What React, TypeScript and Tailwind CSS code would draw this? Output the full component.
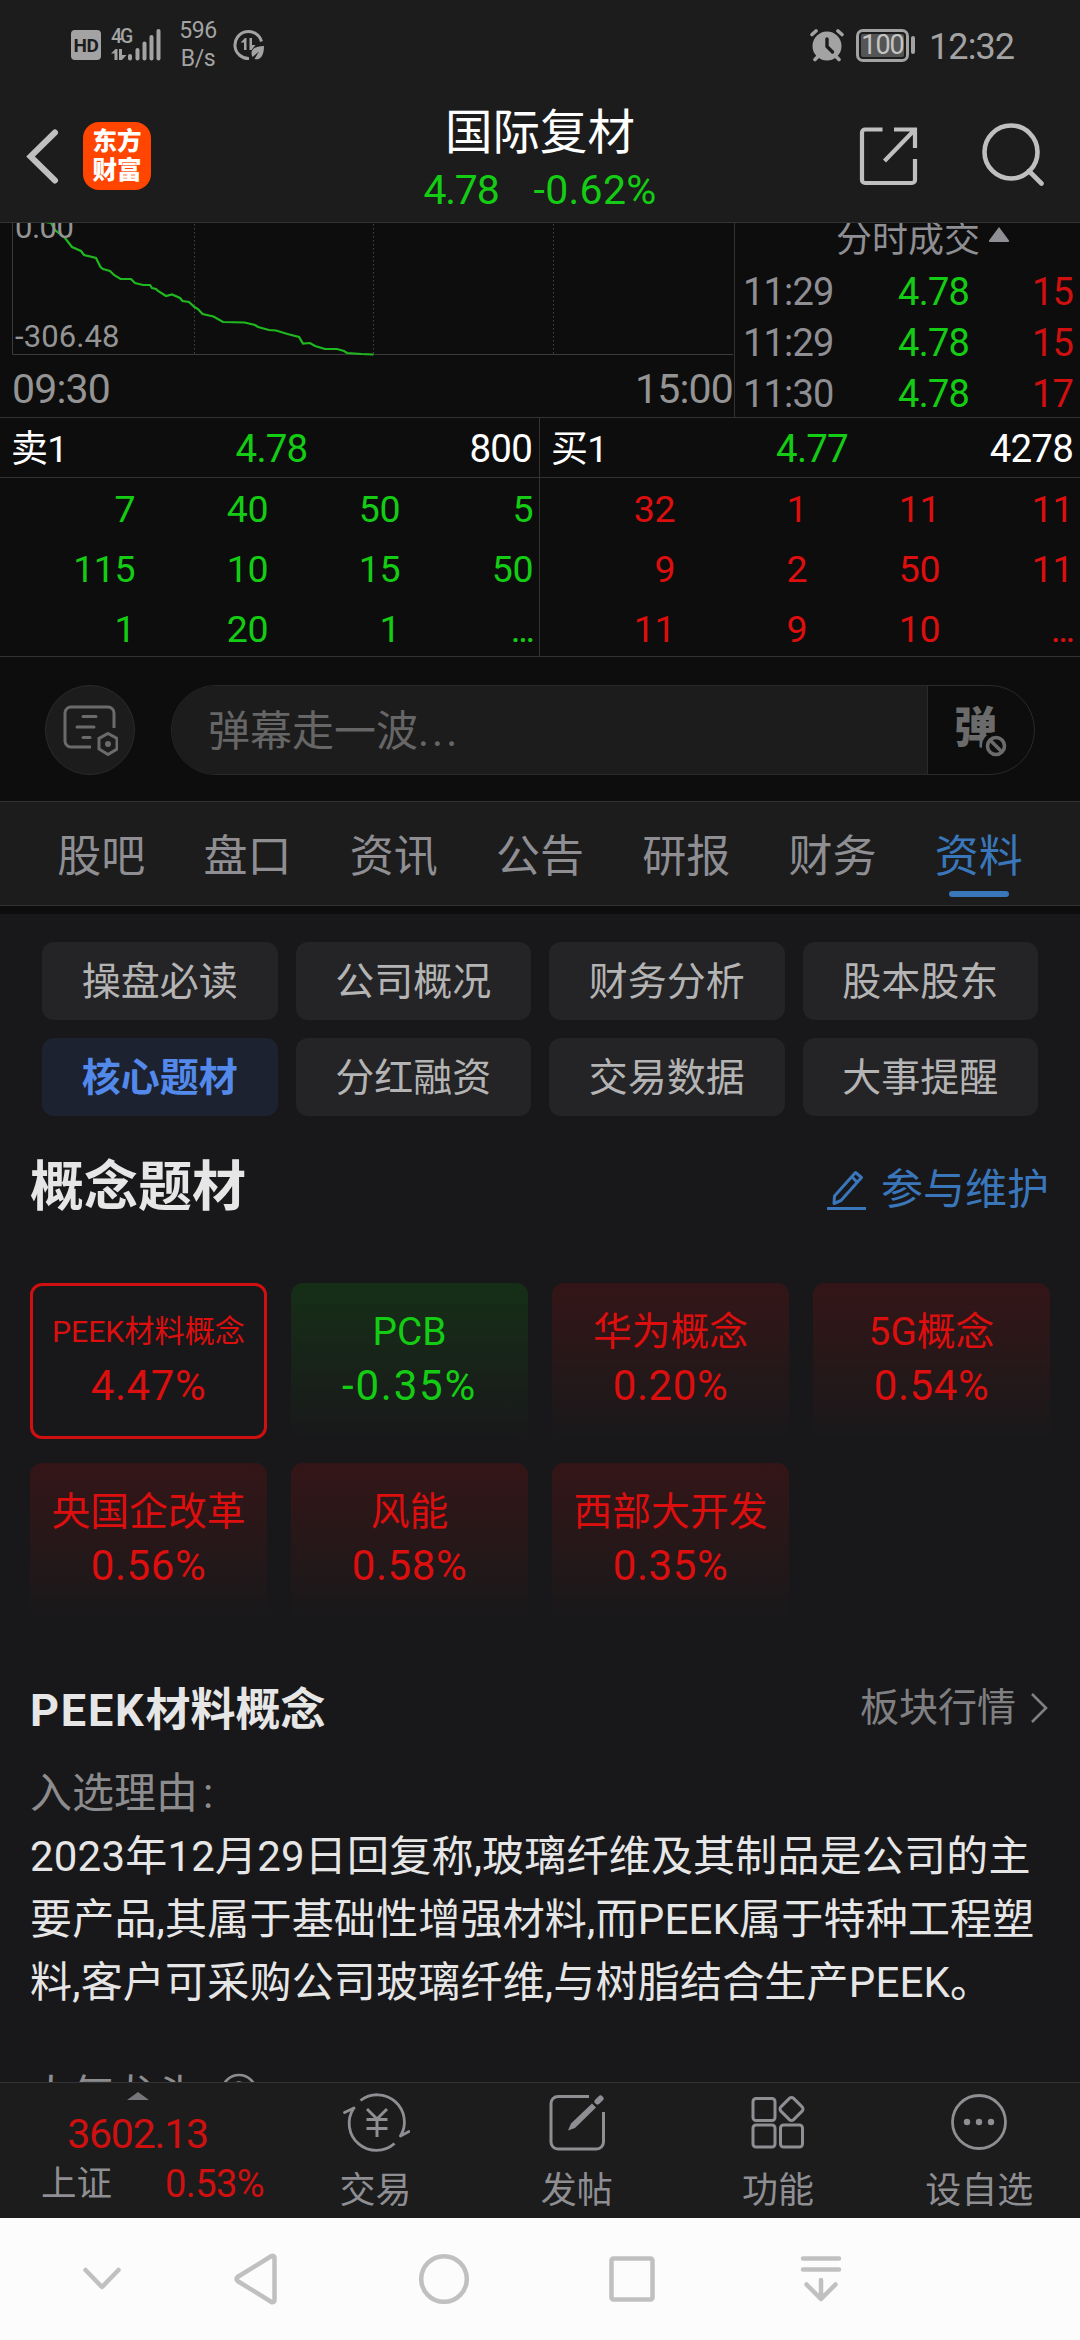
import React from 'react';

const CHART_POINTS =
  '45,-1 51,0 55,7 65,15 72,24 81,28 84,32 96,35 98,39 100.5,44 103,46 110,48 114,52 120.5,56 131,56 135,60 143,62 150,62 152,65 156,66 158,68 166,73 172,71.5 180,75 182.5,78 189,79 194.5,84 198,86 202.5,91 213.5,93.5 223,99 244.5,99.5 255,102 258,104 269,107 276,107.5 287.5,111 299,114 303,120.5 310,120 315,123 325,126 337,126 344,128 347,130 361.5,131 373.5,131.5';

const TRADES = [
  { time: '11:29', price: '4.78', volume: '15' },
  { time: '11:29', price: '4.78', volume: '15' },
  { time: '11:30', price: '4.78', volume: '17' },
];

const SELL_QUEUE = ['7', '40', '50', '5', '115', '10', '15', '50', '1', '20', '1', '...'];
const BUY_QUEUE = ['32', '1', '11', '11', '9', '2', '50', '11', '11', '9', '10', '...'];

const TABS = ['股吧', '盘口', '资讯', '公告', '研报', '财务', '资料'];

const SECTIONS = [
  '操盘必读',
  '公司概况',
  '财务分析',
  '股本股东',
  '核心题材',
  '分红融资',
  '交易数据',
  '大事提醒',
];

interface Concept {
  name: string;
  change: string;
  selected?: boolean;
}

const CONCEPTS: Concept[] = [
  { name: 'PEEK材料概念', change: '4.47%', selected: true },
  { name: 'PCB', change: '-0.35%' },
  { name: '华为概念', change: '0.20%' },
  { name: '5G概念', change: '0.54%' },
  { name: '央国企改革', change: '0.56%' },
  { name: '风能', change: '0.58%' },
  { name: '西部大开发', change: '0.35%' },
];

const REASON_LINES = [
  '2023年12月29日回复称,玻璃纤维及其制品是公司的主',
  '要产品,其属于基础性增强材料,而PEEK属于特种工程塑',
  '料,客户可采购公司玻璃纤维,与树脂结合生产PEEK。',
];

const StatusBar = () => (
  <div className="flex h-[90px] items-center pl-[71px] pr-[66px] text-[#a3a3a3]">
    {/* HD badge */}
    <div className="flex h-[30px] w-[30px] items-center justify-center rounded-[4px] bg-[#a3a3a3] text-[19px] font-bold leading-none tracking-[-0.5px] text-[#1c1c1c]">
      HD
    </div>
    {/* 4G signal */}
    <div className="relative ml-[10px] h-[32px] w-[51px]">
      <span className="absolute left-0 top-0 text-[19.500px] font-medium leading-[15px] tracking-[-2px]">4G</span>
      <svg className="absolute inset-0" width="51" height="32" viewBox="0 0 51 32" fill="currentColor">
        <path d="M0 24.5 4.5 20h2v11H3.5v-6.500zM8 20h3v6h4.500L11 31H8z" />
        <rect x="17" y="25" width="4" height="6.500" rx="2" />
        <rect x="24.500" y="19" width="4" height="12.500" rx="2" />
        <rect x="31.500" y="12.500" width="4" height="19" rx="2" />
        <rect x="38.500" y="6" width="4" height="25.500" rx="2" />
        <rect x="45.500" y="0" width="4" height="31.500" rx="2" />
      </svg>
    </div>
    <div className="ml-[14px] w-[44px] text-center text-[23px] leading-[28px] tracking-[-0.4px]">
      596
      <br />
      B/s
    </div>
    <svg className="ml-[12px]" width="34" height="34" viewBox="0 0 34 34" fill="none">
      <path d="M29.500 13.500A13.500 13.500 0 1 0 17 30.500" stroke="currentColor" strokeWidth="3" />
      <path d="M8.500 14.500 13 10h1.500v12H12v-7.500zM17.500 10H20v7h3.500L19.500 22h-2z" fill="currentColor" />
      <path d="M32 18c-8.500 0-12.500 3-12.500 7 0 1.500.5 3 1.200 4l6.300-5.500-4.500 7.500c5 1.500 9.500-2 9.500-13z" fill="currentColor" />
    </svg>

    <svg className="ml-auto" width="34" height="34" viewBox="0 0 34 34" fill="none">
      <circle cx="17" cy="18" r="14.500" fill="currentColor" />
      <path d="M2 6.500 6 3M32 6.500 28 3M5 31.500l3-3M29 31.500l-3-3" stroke="currentColor" strokeWidth="3.600" strokeLinecap="round" />
      <path d="M17 11v7.500l5.500 5.500" stroke="#1c1c1c" strokeWidth="3.400" strokeLinecap="round" strokeLinejoin="round" />
    </svg>
    <div className="ml-[12px] flex h-[33px] w-[53px] items-center rounded-[7px] border-[3px] border-[#a3a3a3] p-[2px]">
      <div className="flex h-full w-full items-center justify-center rounded-[2px] bg-[#555] text-[27px] leading-none tracking-[-1px] text-[#c4c4c4]">
        100
      </div>
    </div>
    <div className="ml-[2px] h-[18px] w-[4px] rounded-full bg-[#a3a3a3]" />
    <div className="ml-[14px] w-[85px] whitespace-nowrap pt-[3px] text-[36px] leading-none tracking-[-0.9px]">12:32</div>
  </div>
);

const Header = () => (
  <div className="grid grid-cols-[1fr_auto_1fr] items-start">
    <div className="flex items-center pl-[25px] pt-[32px]">
      <svg width="36" height="67" viewBox="0 0 36 67" fill="none" stroke="#bfbfbf" strokeWidth="6">
        <path d="M30 9.500 5.500 33.500 30 57.500" strokeLinecap="round" />
      </svg>
      <div className="ml-[22px] flex h-[68px] w-[68px] flex-col items-center justify-center rounded-[16px] bg-[#ff4500] text-[24.500px] font-black leading-[29px] text-white">
        <span>东方</span>
        <span>财富</span>
      </div>
    </div>
    <div className="flex flex-col items-center text-white">
      <div className="pt-[15px] text-[47.500px] leading-[56px]">国际复材</div>
      <div className="mt-[7px] flex gap-[35px] text-[41px] leading-[44px] text-[#14cc14]">
        <span className="tracking-[-1.200px]">4.78</span>
        <span className="tracking-[0.3px]">-0.62%</span>
      </div>
    </div>
    <div className="flex justify-end gap-[60px] pr-[36px] pt-[31px]">
      <svg className="mt-[2px]" width="64" height="64" viewBox="0 0 64 64" fill="none" stroke="#bfbfbf" strokeWidth="4.200">
        <path d="M28.500 6.500H11a3 3 0 0 0-3 3V57a3 3 0 0 0 3 3h47a3 3 0 0 0 3-3V36" />
        <path d="M40 6.500h21V25M61 6.500 30.500 38" />
      </svg>
      <svg width="66" height="66" viewBox="0 0 66 66" fill="none" stroke="#bfbfbf" strokeWidth="4.600">
        <circle cx="33" cy="31" r="26.500" />
        <path d="M51 50 63.500 62.500" strokeLinecap="round" />
      </svg>
    </div>
  </div>
);

const MoneyFlowChart = () => (
  <div className="relative h-[194px] w-[734px] overflow-hidden text-[#949494]">
    <svg width="734" height="194" viewBox="0 0 734 194" fill="none">
      <path d="M12.500 0v131.500H733" stroke="#3c3c3c" />
      <path d="M194.500 1v130M373.500 1v130M553.500 1v130" stroke="#444" strokeDasharray="1.500 2.500" />
      <polyline points={CHART_POINTS} stroke="#1fb81f" strokeWidth="2.200" />
    </svg>
    <span className="absolute left-[15px] top-[-11px] text-[31px] leading-[32px] tracking-[-0.5px]">0.00</span>
    <span className="absolute left-[15px] top-[98px] text-[31px] leading-[32px] tracking-[0.1px]">-306.48</span>
    <div className="absolute inset-x-0 top-[143px] flex justify-between pl-[12px] pr-px text-[41px] leading-[46px] tracking-[-0.8px]">
      <span>09:30</span>
      <span>15:00</span>
    </div>
  </div>
);

const TradeList = () => (
  <div className="h-[194px] flex-1 overflow-hidden border-l border-[#333] pl-[8px] pr-[7px]">
    <div className="mt-[-9px] flex h-[52px] items-center justify-center gap-[8px] pl-[30px] text-[36px] text-[#8e8e93]">
      分时成交
      <svg className="mb-[12px]" width="22" height="15" viewBox="0 0 22 15" fill="currentColor">
        <path d="M11 0 21 13.500a1 1 0 0 1-1 1.500H2a1 1 0 0 1-1-1.500z" />
      </svg>
    </div>
    {TRADES.map((trade, i) => (
      <div key={i} className="grid h-[51px] grid-cols-[92px_134px_1fr] items-center text-[38px] leading-none tracking-[-0.8px]">
        <span className="text-[#8e8e93]">{trade.time}</span>
        <span className="text-right text-[#14cc14]">{trade.price}</span>
        <span className="text-right text-[#d01010]">{trade.volume}</span>
      </div>
    ))}
  </div>
);

interface OrderSideProps {
  label: string;
  price: string;
  volume: string;
  queue: string[];
  queueClass: string;
}

const OrderSide: React.FC<OrderSideProps> = ({ label, price, volume, queue, queueClass }) => (
  <div>
    <div className="grid h-[60px] grid-cols-[1fr_auto_1fr] items-center border-b border-[#333] pl-[11px] pr-[7px] pt-[4px] text-[38.500px] leading-none tracking-[-0.8px] text-white">
      <span className="text-[37px]">{label}</span>
      <span className="text-[#14cc14]">{price}</span>
      <span className="text-right">{volume}</span>
    </div>
    <div className={`grid h-[178px] grid-rows-[60px_60px_58px] pt-px text-right text-[37.500px] leading-[60px] ${queueClass}`}>
      {queue.map((value, i) => (
        <span key={i} className={value === '...' ? 'tracking-[-2.500px]' : 'tracking-[-0.5px]'}>
          {value}
        </span>
      ))}
    </div>
  </div>
);

const DanmuBar = () => (
  <div className="flex h-[144px] items-center gap-[36px] pl-[45px] pr-[45px] pt-[2px]">
    <div className="flex h-[90px] w-[90px] items-center justify-center rounded-full border border-[#2a2a2a] bg-[#1c1c1c]">
      <svg width="56" height="52" viewBox="0 0 56 52" fill="none" stroke="#6b6b6b" strokeWidth="3" strokeLinecap="round">
        <path d="M29 43H9a6 6 0 0 1-6-6V9a6 6 0 0 1 6-6h37a6 6 0 0 1 6 6v15" strokeLinecap="butt" />
        <path d="M21 12.500h13M15 23h17M21 33.500h7" />
        <path d="M46 29.500 55 34.500v10.500L46 50.500l-9-5.500V34.500z" strokeLinecap="butt" />
        <circle cx="46" cy="40" r="3" fill="#6b6b6b" stroke="none" />
      </svg>
    </div>
    <div className="flex h-[90px] flex-1 overflow-hidden rounded-full border border-[#2a2a2a]">
      <div className="flex flex-1 items-center bg-[#1c1c1c] pl-[36px] pt-[3px] text-[42px] text-[#666]">
        弹幕走一波<span className="tracking-[3px]">...</span>
      </div>
      <div className="relative w-[107px] border-l border-[#2a2a2a]">
        <span className="absolute left-[26px] top-[18px] text-[43px] font-black leading-[48px] text-[#6b6b6b]">弹</span>
        <svg className="absolute left-[54px] top-[46px]" width="28" height="28" viewBox="0 0 28 28" fill="none">
          <circle cx="14" cy="14" r="14" fill="#0d0d0d" />
          <circle cx="14" cy="14" r="8.500" stroke="#6b6b6b" strokeWidth="3.600" />
          <path d="m8.500 8.500 11 11" stroke="#6b6b6b" strokeWidth="3.600" />
        </svg>
      </div>
    </div>
  </div>
);

const TabBar = () => (
  <div className="grid h-[105px] grid-cols-7 border-y border-[#333] bg-[#1c1c1c] px-[28px]">
    {TABS.map((tab) => {
      const active = tab === '资料';
      return (
        <div key={tab} className={`flex flex-col items-center pt-[22px] text-[44px] leading-[66px] ${active ? 'text-[#3a76ba]' : 'text-[#8e8e93]'}`}>
          {tab}
          {active && <div className="mt-px h-[6px] w-[60px] rounded-full bg-[#3a76ba]" />}
        </div>
      );
    })}
  </div>
);

const ConceptCard: React.FC<{ concept: Concept }> = ({ concept }) => {
  const falling = concept.change.startsWith('-');
  const surface = concept.selected
    ? 'border-[#d01010]'
    : falling
      ? 'border-transparent bg-linear-to-b from-[#152f16] to-[#18181a] bg-origin-border'
      : 'border-transparent bg-linear-to-b from-[#341517] to-[#18181a] bg-origin-border';
  return (
    <div className={`flex h-[156px] flex-col items-center whitespace-nowrap rounded-[12px] border-[3px] pt-[18px] ${surface} ${falling ? 'text-[#14cc14]' : 'text-[#dc0e0e]'}`}>
      <div className={`leading-[56px] ${concept.name.length > 6 ? 'text-[30.200px]' : 'text-[38.800px]'}`}>{concept.name}</div>
      <div className={`text-[42px] leading-[52px] ${falling ? 'tracking-[1.800px]' : 'tracking-[0.6px]'}`}>{concept.change}</div>
    </div>
  );
};

const YuanIcon = () => (
  <svg width="68" height="60" viewBox="0 0 68 60" fill="none" stroke="currentColor" strokeWidth="2.800">
    <path d="M18.500 8.500A27.200 27.200 0 0 1 58.500 44M52.500 51.500A27.200 27.200 0 0 1 11.500 16.500" />
    <path d="M2.500 20.500 12 16M67 39.500 58.500 44" strokeLinecap="round" />
    <path d="m25 17 10 10 10-10M24.500 27.500h21M24.500 36.500h21M35 27v18" strokeWidth="3" />
  </svg>
);

const PostIcon = () => (
  <svg width="60" height="60" viewBox="0 0 60 60" fill="none" stroke="currentColor" strokeWidth="3">
    <path d="M42 4.500H11a7 7 0 0 0-7 7V50a7 7 0 0 0 7 7h38.500a7 7 0 0 0 7-7V20" />
    <path d="M21 38.500 24 31.500 45 11.500 49 15.500 28 36z" fill="currentColor" stroke="none" />
    <path d="m50.500 9.500 3-3" strokeWidth="6" strokeLinecap="round" />
  </svg>
);

const FunctionIcon = () => (
  <svg width="60" height="60" viewBox="0 0 60 60" fill="none" stroke="currentColor" strokeWidth="3">
    <rect x="5" y="6.500" width="22" height="22" rx="3" />
    <rect x="5" y="33" width="22" height="22" rx="3" />
    <rect x="32.500" y="33" width="22" height="22" rx="3" />
    <rect x="34.500" y="8" width="18" height="18" rx="3" transform="rotate(45 43.500 17)" />
  </svg>
);

const MoreIcon = () => (
  <svg width="60" height="60" viewBox="0 0 60 60" fill="none">
    <circle cx="30" cy="30" r="26.500" stroke="currentColor" strokeWidth="2.800" />
    <g fill="currentColor">
      <circle cx="18" cy="30" r="3.200" />
      <circle cx="30" cy="30" r="3.200" />
      <circle cx="42" cy="30" r="3.200" />
    </g>
  </svg>
);

const ACTIONS = [
  { label: '交易', icon: YuanIcon },
  { label: '发帖', icon: PostIcon },
  { label: '功能', icon: FunctionIcon },
  { label: '设自选', icon: MoreIcon },
];

const BottomBar = () => (
  <div className="flex h-[136px] border-t border-[#333] bg-[#1c1c1c] text-[#8e8e93]">
    <div className="flex w-[275px] flex-col items-center text-[#d01010]">
      <svg className="mt-[9px]" width="22" height="8" viewBox="0 0 22 8" fill="#77777b">
        <path d="M11 0 22 8H0z" />
      </svg>
      <div className="mt-[12px] text-[41px] leading-[44px] tracking-[-1.200px]">3602.13</div>
      <div className="mt-[4px] flex w-full items-center justify-between pl-[41px] pr-[11px] leading-[48px]">
        <span className="text-[35.500px] text-[#8e8e93]">上证</span>
        <span className="text-[38px] tracking-[-0.6px]">0.53%</span>
      </div>
    </div>
    <div className="grid flex-1 grid-cols-4">
      {ACTIONS.map(({ label, icon: Icon }) => (
        <div key={label} className="flex flex-col items-center pt-[9px]">
          <Icon />
          <span className="mt-[17px] text-[36px] leading-[44px]">{label}</span>
        </div>
      ))}
    </div>
  </div>
);

const NavigationBar = () => (
  <div className="h-[122px] bg-[#fcfcfc]">
    <svg width="1080" height="122" viewBox="0 0 1080 122" fill="none" stroke="#c0c0c0" strokeWidth="4.500" strokeLinecap="round" strokeLinejoin="round">
      <path d="m85.500 52 16.500 17 16.500-17" />
      <path d="M274.500 39.500v43a2 2 0 0 1-3 1.500l-34-21a2.500 2.500 0 0 1 0-4l34-21a2 2 0 0 1 3 1.500z" />
      <circle cx="444" cy="61" r="22.800" />
      <rect x="611.500" y="40.500" width="41" height="41" rx="2" />
      <path d="M803 40.500h36M803 51.500h36M821 62v19M806.500 66.500 821 81l14.500-14.500" />
    </svg>
  </div>
);

export default function App() {
  return (
    <div className="flex h-[2340px] w-[1080px] flex-col overflow-hidden bg-[#18181a] font-['Roboto','Noto_Sans_CJK_SC',sans-serif]">
      <div className="h-[223px] shrink-0 border-b border-[#333] bg-[#1c1c1c]">
        <StatusBar />
        <Header />
      </div>

      <div className="bg-[#0d0d0d]">
        <div className="flex">
          <MoneyFlowChart />
          <TradeList />
        </div>
        <div className="grid grid-cols-2 divide-x divide-[#333] border-y border-[#333]">
          <OrderSide
            label="卖1"
            price="4.78"
            volume="800"
            queue={SELL_QUEUE}
            queueClass="grid-cols-[135px_133px_132px_1fr] pr-[6px] text-[#14cc14]"
          />
          <OrderSide
            label="买1"
            price="4.77"
            volume="4278"
            queue={BUY_QUEUE}
            queueClass="grid-cols-[135px_132px_133px_1fr] pr-[7px] text-[#dc0e0e]"
          />
        </div>
        <DanmuBar />
        <TabBar />
        <div className="h-[8px]" />
      </div>

      {/* Company info */}
      <div className="min-h-0 flex-1 overflow-hidden">
        <div className="grid grid-cols-4 gap-[18px] px-[42px] pt-[28px]">
          {SECTIONS.map((section) => (
            <div
              key={section}
              className={`flex h-[78px] items-center justify-center rounded-[12px] pt-[2px] text-[39px] leading-none ${
                section === '核心题材' ? 'bg-[#1c2230] font-bold text-[#5289ea]' : 'bg-[#242426] text-[#b4b4b4]'
              }`}
            >
              {section}
            </div>
          ))}
        </div>

        <div className="flex items-center justify-between pl-[30px] pr-[31px] pt-[37px]">
          <h2 className="text-[54px] font-bold leading-[70px] text-[#e6e6e6]">概念题材</h2>
          <div className="flex items-center gap-[14px] pt-[4px] text-[42px] leading-[60px] text-[#3a76ba]">
            <svg width="41" height="42" viewBox="0 0 41 42" fill="none" stroke="currentColor" strokeWidth="3">
              <path d="M8 34.500 8.500 27 29.500 3.500 35.500 8.500 15 31.500zM26 8l5.500 5.500" strokeLinejoin="round" />
              <path d="M1 39.500h39" />
            </svg>
            参与维护
          </div>
        </div>

        <div className="grid grid-cols-4 gap-[24px] px-[30px] pt-[60px]">
          {CONCEPTS.map((concept) => (
            <ConceptCard key={concept.name} concept={concept} />
          ))}
        </div>

        <div className="px-[30px]">
          <div className="flex items-center justify-between pt-[60px]">
            <h3 className="text-[45px] font-bold leading-[64px] text-[#e6e6e6]">
              <span className="tracking-[1.800px]">PEEK</span>材料概念
            </h3>
            <div className="flex items-center gap-[14px] pb-[6px] text-[39px] leading-[58px] text-[#808082]">
              板块行情
              <svg width="20" height="32" viewBox="0 0 20 32" fill="none" stroke="currentColor" strokeWidth="2.600">
                <path d="M2 2l14 14L2 30" />
              </svg>
            </div>
          </div>
          <div className="mt-[19px] text-[42px] leading-[63px] text-[#8c8c8e]">
            入选理由<span className="ml-[5px]">:</span>
          </div>
          <div className="whitespace-nowrap text-[42px] leading-[63px] tracking-[0.2px] text-[#e6e6e6]">
            {REASON_LINES.map((line) => (
              <div key={line}>{line}</div>
            ))}
          </div>
          <div className="mt-[52px] flex items-start gap-[22px] text-[42px] leading-[60px] text-[#8c8c8e]">
            <span>人气龙头</span>
            <svg className="mt-[7px]" width="38" height="38" viewBox="0 0 38 38" fill="none" stroke="currentColor" strokeWidth="2.600">
              <circle cx="19" cy="19" r="17" />
              <path d="M13.500 15a5.500 5.500 0 1 1 8 5c-1.700 1-2.500 2-2.500 4" />
            </svg>
          </div>
        </div>
      </div>

      <BottomBar />
      <NavigationBar />
    </div>
  );
}
